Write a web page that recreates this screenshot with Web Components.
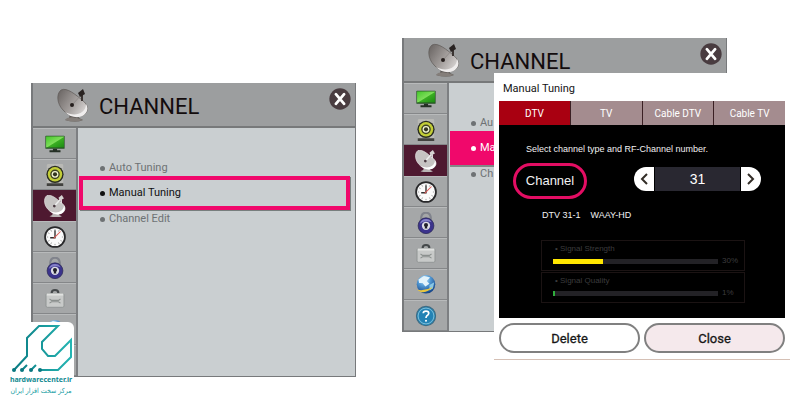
<!DOCTYPE html>
<html lang="en">
<head>
<meta charset="utf-8">
<title>Channel - Manual Tuning</title>
<style>
    body{
        margin: 0;
        background-color: #fff;
        font-family: Roboto, "Liberation Sans", sans-serif;
    }
</style>
</head>
<body>
<tuning-guide>
    <tv-screen>
        <tv-menu-item slot="items">Auto Tuning</tv-menu-item>
        <tv-menu-item slot="items" state="outlined">Manual Tuning</tv-menu-item>
        <tv-menu-item slot="items">Channel Edit</tv-menu-item>
    </tv-screen>
    <tv-screen>
        <tv-menu-item slot="items">Au</tv-menu-item>
        <tv-menu-item slot="items" state="filled">Ma</tv-menu-item>
        <tv-menu-item slot="items">Ch</tv-menu-item>
        <tuning-dialog slot="overlay">
            <signal-meter slot="meters" label="Signal Strength" value="30" color="#ffe600"></signal-meter>
            <signal-meter slot="meters" label="Signal Quality" value="1" color="#2fae3c"></signal-meter>
        </tuning-dialog>
    </tv-screen>
    <brand-logo slot="brand"></brand-logo>
</tuning-guide>

<script>
const icons = {
    dish: `
        <defs>
            <linearGradient id="bowl" x1="0" y1="0.2" x2="1" y2="0.8">
                <stop offset="0" stop-color="#6f6a68"/><stop offset="0.5" stop-color="#a19c9a"/><stop offset="1" stop-color="#dddad9"/>
            </linearGradient>
        </defs>
        <path d="M13 25 L21 24 L22 29 L26 31 Q19 34 8 31 L12 29Z" fill="#5d5855"/>
        <path d="M10 29 Q17 27 26 31 Q17 34 8 31Z" fill="#847e7a"/>
        <path d="M4 1 C-1 5 0 15 6 21 C12 28 22 30 28 25 C33 20 30 15 25 11 C19 6 10 -2 4 1Z" fill="url(#bowl)" stroke="#5f5a58" stroke-width="0.7"/>
        <path d="M8 23 C14 29 23 30 28 25 C31 22 31 18 29 15 C29 25 17 28 8 23Z" fill="#efeded"/>
        <path d="M15 16 L25 5" fill="none" stroke="#8a8583" stroke-width="0.8"/>
        <path d="M25 12 L25 6" fill="none" stroke="#3b3432" stroke-width="2"/>
        <path d="M21 4 L26 0 L28 5 L23 8Z" fill="#292322"/>
        <circle cx="15" cy="16" r="2" fill="#251e1d"/>`,
    dishLight: `
        <path d="M13 25 L21 24 L22 29 L26 31 Q19 34 8 31 L12 29Z" fill="#b9b4b4"/>
        <path d="M4 1 C-1 5 0 15 6 21 C12 28 22 30 28 25 C33 20 30 15 25 11 C19 6 10 -2 4 1Z" fill="#c6c3c2" stroke="#e6e3e3" stroke-width="1"/>
        <path d="M8 23 C14 29 23 30 28 25 C31 22 31 18 29 15 C29 25 17 28 8 23Z" fill="#fff"/>
        <path d="M15 16 L25 5 M25 12 V6" fill="none" stroke="#eee" stroke-width="2"/>
        <path d="M21 4 L26 0 L29 5 L23 8Z" fill="#d6d2d1"/>
        <circle cx="15" cy="16" r="2" fill="#4a3a40"/>`,
    monitor: `
        <defs>
            <linearGradient id="green" x1="0" y1="0" x2="1" y2="1">
                <stop offset="0" stop-color="#45c72b"/><stop offset="0.5" stop-color="#7ddd59"/><stop offset="0.55" stop-color="#3aae22"/><stop offset="1" stop-color="#1b8a12"/>
            </linearGradient>
        </defs>
        <rect x="2" y="4" width="28" height="19" rx="1" fill="#275424"/>
        <rect x="3" y="5" width="26" height="16" fill="url(#green)"/>
        <path d="M13 23 H19 V25 H24 V28 H8 V25 H13Z" fill="#253025"/>`,
    speaker: `
        <rect x="4" y="0" width="24" height="32" rx="2" fill="#b9b9b5"/>
        <path d="M4 28 H28 V32 H4Z" fill="#41413e"/>
        <circle cx="16" cy="15" r="12.500" fill="#2a2d20"/>
        <circle cx="16" cy="15" r="10.500" fill="#c3ce37"/>
        <circle cx="16" cy="15" r="6" fill="#f3f6d4" stroke="#3d4022" stroke-width="2"/>
        <circle cx="16" cy="15" r="3" fill="#31331e"/>`,
    clock: `
        <circle cx="16" cy="16" r="14.500" fill="#fafafa" stroke="#28282a" stroke-width="2.500"/>
        <path d="M16 4V6 M16 26V28 M4 16H6 M26 16H28 M10 6L11 8 M22 6L21 8 M10 26L11 24 M22 26L21 24 M6 10L8 11 M6 22L8 21 M26 22L24 21" stroke="#777" stroke-width="1"/>
        <path d="M16 6 V17 H9" fill="none" stroke="#303030" stroke-width="2"/>
        <path d="M14 18 L24 8" stroke="#dd5751" stroke-width="1.5"/>`,
    lock: `
        <path d="M9 12 V8 Q10 1 16 1 Q22 1 23 8 V12" fill="none" stroke="#80838c" stroke-width="3"/>
        <circle cx="16" cy="20" r="11.500" fill="#3b338c" stroke="#292650" stroke-width="1"/>
        <path d="M7 17 Q9 10 16 10 Q22 10 24 15 Q15 11 7 17Z" fill="#8580c8"/>
        <circle cx="16" cy="20" r="6" fill="#dcdce5"/>
        <circle cx="16" cy="19" r="3" fill="#22202b"/>
        <path d="M15 20 H17 L18 24 H14Z" fill="#22202b"/>`,
    toolbox: `
        <path d="M11 8 Q11 3 16 3 Q21 3 21 8" fill="none" stroke="#45494b" stroke-width="3"/>
        <rect x="3" y="8" width="26" height="20" rx="2" fill="#c8cac9" stroke="#858987"/>
        <rect x="4" y="8" width="24" height="3" fill="#e0e1e0"/>
        <path d="M8 16 L11 18 H21 L24 16 M8 22 L11 20 H21 L24 22" fill="none" stroke="#8b908e" stroke-width="1.5"/>`,
    globe: `
        <defs>
            <radialGradient id="sea" cx="0.4" cy="0.25" r="0.8">
                <stop offset="0" stop-color="#d1efff"/><stop offset="0.4" stop-color="#559dd7"/><stop offset="1" stop-color="#0b397f"/>
            </radialGradient>
        </defs>
        <circle cx="16" cy="15" r="13.500" fill="url(#sea)"/>
        <path d="M5 8 L13 3 L22 5 L17 10 L21 14 L15 18 L11 13 L6 13Z" fill="#e3f3fb"/>
        <path d="M21 16 L28 12 L26 21 L21 24Z" fill="#88c7e5"/>
        <path d="M3 23 Q15 25 26 19 Q18 28 8 26Z" fill="#e8c641"/>`,
    help: `
        <circle cx="16" cy="16" r="14" fill="#2787b5" stroke="#3e6b83" stroke-width="1.5"/>
        <circle cx="16" cy="16" r="11.500" fill="#2382b4" stroke="#a4d7ea" stroke-width="1"/>
        <path d="M12 12 Q12 9 16 9 Q20 9 20 12 Q20 14 17 16 Q16 17 16 19" fill="none" stroke="#fff" stroke-width="2.500"/>
        <circle cx="16" cy="23" r="1.500" fill="#fff"/>`,
    close: `
        <circle cx="16" cy="16" r="15.500" fill="#493c40"/>
        <path d="M10 9 L22 23 M22 9 L10 23" stroke="#fff" stroke-width="4" stroke-linecap="round"/>`
};

class TvIcon extends HTMLElement{
    constructor(){
        super();
        this.attachShadow({mode: 'open'});
    }
    connectedCallback(){
        this.shadowRoot.innerHTML = `
            <style>
                :host{
                    display: block;
                    width: 22px;
                    height: 22px;
                }
                svg{
                    display: block;
                    width: 100%;
                    height: 100%;
                }
            </style>
            <svg viewBox="0 0 32 32" aria-hidden="true">${icons[this.getAttribute('name')]}</svg>
        `;
    }
}
customElements.define('tv-icon', TvIcon);

class TvMenuItem extends HTMLElement{
    constructor(){
        super();
        this.attachShadow({mode: 'open'});
    }
    connectedCallback(){
        this.shadowRoot.innerHTML = `
            <style>
                :host{
                    display: block;
                    --item-color: #6e7274;
                }
                button{
                    display: flex;
                    align-items: center;
                    gap: 4px;
                    box-sizing: border-box;
                    width: 100%;
                    height: 16px;
                    padding: 0 21px;
                    border: 0;
                    background: none;
                    color: var(--item-color);
                    font-family: inherit;
                    font-size: 11px;
                    line-height: 16px;
                    text-align: left;
                }
                button:before{
                    content: '';
                    width: 5px;
                    height: 5px;
                    border-radius: 50%;
                    background-color: var(--item-color);
                }
                :host([state]){
                    margin-bottom: 1px;
                }
                :host([state]) button{
                    height: 34px;
                }
                :host([state="outlined"]){
                    --item-color: #111;
                }
                :host([state="outlined"]) button{
                    padding: 0 17px;
                    border: 4px solid #f0086b;
                    box-shadow: 1px 1px 0 #777e7d;
                }
                :host([state="filled"]){
                    --item-color: #fff;
                }
                :host([state="filled"]) button{
                    background-color: #f0086b;
                    box-shadow: 0 2px 0 #818886;
                }
            </style>
            <button type="button"><span><slot></slot></span></button>
        `;
    }
}
customElements.define('tv-menu-item', TvMenuItem);

class TvScreen extends HTMLElement{
    constructor(){
        super();
        this.attachShadow({mode: 'open'});
    }
    getSidebar(){
        const names = ['monitor', 'speaker', 'dishLight', 'clock', 'lock', 'toolbox', 'globe', 'help'];
        return names.map(name => `
            <button type="button" class="${name === 'dishLight' ? 'active' : ''}" aria-label="${name}">
                <tv-icon name="${name}"></tv-icon>
            </button>`).join('');
    }
    getStyles(){
        return `
            <style>
                :host{
                    display: block;
                    position: relative;
                    flex: 1;
                    box-sizing: border-box;
                    border: 2px solid #77797b;
                    border-width: 0 1px 1px 2px;
                    background-color: #cacfd1;
                }
                header{
                    display: flex;
                    align-items: center;
                    gap: 10px;
                    box-sizing: border-box;
                    height: 45px;
                    padding: 0 4px 0 24px;
                    border-bottom: 2px solid #77797a;
                    background-color: #9c9e9f;
                }
                header tv-icon{
                    width: 32px;
                    height: 34px;
                }
                h1{
                    flex: 1;
                    margin: 0;
                    padding-top: 5px;
                    color: #130c0d;
                    font-size: 22px;
                    font-weight: 400;
                    line-height: 30px;
                }
                button{
                    padding: 0;
                    border: 0;
                    background: none;
                }
                .close{
                    align-self: flex-start;
                    padding-top: 5px;
                }
                .close tv-icon{
                    width: 22px;
                    height: 22px;
                }
                .body{
                    display: flex;
                }
                nav{
                    width: 43px;
                    border-right: 2px solid #7d7f82;
                }
                nav button{
                    display: flex;
                    align-items: center;
                    justify-content: center;
                    box-sizing: border-box;
                    width: 100%;
                    height: 31px;
                    border-bottom: 1px solid #858789;
                    border-top: 1px solid #b8babb;
                    background-color: #a5a7a8;
                }
                nav .active{
                    border-color: #4e1930;
                    background-color: #4e1930;
                }
                .items{
                    flex: 1;
                    padding: 32px 5px 0 1px;
                }
            </style>
        `;
    }
    connectedCallback(){
        this.shadowRoot.innerHTML = `
            ${this.getStyles()}
            <header>
                <tv-icon name="dish"></tv-icon>
                <h1>CHANNEL</h1>
                <button type="button" class="close" aria-label="Close"><tv-icon name="close"></tv-icon></button>
            </header>
            <div class="body">
                <nav>${this.getSidebar()}</nav>
                <div class="items"><slot name="items"></slot></div>
            </div>
            <slot name="overlay"></slot>
        `;
    }
}
customElements.define('tv-screen', TvScreen);

class SignalMeter extends HTMLElement{
    constructor(){
        super();
        this.attachShadow({mode: 'open'});
    }
    connectedCallback(){
        const value = this.getAttribute('value');
        this.shadowRoot.innerHTML = `
            <style>
                :host{
                    display: block;
                    padding: 2px 4px 3px 11px;
                    border: 1px solid #1b1313;
                    color: #3c3c3e;
                    font-size: 8px;
                    line-height: 12px;
                }
                label{
                    display: block;
                    padding-left: 2px;
                }
                .row{
                    display: flex;
                    align-items: center;
                    gap: 4px;
                }
                progress{
                    appearance: none;
                    flex: 1;
                    min-width: 0;
                    height: 5px;
                    border: 0;
                }
                progress::-webkit-progress-bar{
                    background-color: #232226;
                }
                progress::-webkit-progress-value{
                    background-color: ${this.getAttribute('color')};
                }
                output{
                    width: 18px;
                }
            </style>
            <label for="level">• ${this.getAttribute('label')}</label>
            <div class="row">
                <progress id="level" max="100" value="${value}"></progress>
                <output>${value}%</output>
            </div>
        `;
    }
}
customElements.define('signal-meter', SignalMeter);

class TuningDialog extends HTMLElement{
    constructor(){
        super();
        this.attachShadow({mode: 'open'});
    }
    getStyles(){
        return `
            <style>
                /* floats over the right edge of the screen */
                :host{
                    display: block;
                    position: absolute;
                    top: 35px;
                    left: 90px;
                    right: -64px;
                    box-sizing: border-box;
                    padding: 6px 5px;
                    border-bottom: 1px solid #d5c0b5;
                    background-color: #fff;
                }
                h2{
                    margin: 0;
                    padding: 0 4px 2px;
                    color: #151515;
                    font-size: 11px;
                    font-weight: 400;
                    line-height: 20px;
                }
                button, input{
                    margin: 0;
                    padding: 0;
                    border: 0;
                    font-family: inherit;
                }
                .tabs{
                    display: grid;
                    grid-template-columns: repeat(4, 1fr);
                    gap: 1px;
                    background-color: #3b2024;
                }
                .tabs button{
                    height: 24px;
                    background-color: #a48c8f;
                    color: #fff;
                    font-size: 10px;
                }
                .tabs .selected{
                    background-color: #a90011;
                }
                .content{
                    padding: 16px 24px 15px 14px;
                    background-color: #000;
                    color: #f2f2f2;
                    font-family: "Liberation Sans", sans-serif;
                    font-size: 9px;
                    line-height: 16px;
                }
                p{
                    margin: 0;
                    padding-left: 13px;
                }
                .channel{
                    display: flex;
                    align-items: center;
                    justify-content: space-between;
                    padding: 6px 0 8px;
                }
                .channel label{
                    box-sizing: border-box;
                    width: 74px;
                    border: 3px solid #e30d63;
                    border-radius: 18px;
                    font-size: 13px;
                    line-height: 30px;
                    text-align: center;
                }
                .stepper{
                    display: flex;
                    gap: 1px;
                    height: 24px;
                    padding-bottom: 4px;
                }
                .stepper button{
                    display: flex;
                    align-items: center;
                    justify-content: center;
                    width: 20px;
                    border-radius: 12px 0 0 12px;
                    background-color: #fff;
                }
                .stepper button:last-child{
                    border-radius: 0 12px 12px 0;
                }
                .stepper svg{
                    width: 8px;
                    height: 12px;
                    fill: none;
                    stroke: #332d27;
                    stroke-width: 2;
                }
                input{
                    width: 85px;
                    background-color: #292831;
                    color: #fff;
                    font-size: 14px;
                    text-align: center;
                }
                .station{
                    display: flex;
                    gap: 10px;
                    padding-left: 29px;
                }
                .meters{
                    display: grid;
                    gap: 1px;
                    padding: 17px 16px 0 28px;
                }
                footer{
                    display: grid;
                    grid-template-columns: 1fr 1fr;
                    gap: 4px;
                    padding-top: 5px;
                }
                footer button{
                    height: 30px;
                    border: 2px solid #808080;
                    border-radius: 15px;
                    background-color: #fff;
                    color: #161616;
                    font-size: 13px;
                    -webkit-text-stroke: 0.3px #161616;
                }
                footer button:last-child{
                    background-color: #f5e9ec;
                }
            </style>
        `;
    }
    connectedCallback(){
        this.shadowRoot.innerHTML = `
            ${this.getStyles()}
            <h2>Manual Tuning</h2>
            <div class="tabs">
                <button type="button" class="selected">DTV</button>
                <button type="button">TV</button>
                <button type="button">Cable DTV</button>
                <button type="button">Cable TV</button>
            </div>
            <div class="content">
                <p>Select channel type and RF-Channel number.</p>
                <div class="channel">
                    <label for="number">Channel</label>
                    <div class="stepper">
                        <button type="button" aria-label="Previous"><svg viewBox="0 0 8 12"><path d="M7 1 L2 6 L7 11"/></svg></button>
                        <input id="number" type="text" value="31">
                        <button type="button" aria-label="Next"><svg viewBox="0 0 8 12"><path d="M1 1 L6 6 L1 11"/></svg></button>
                    </div>
                </div>
                <div class="station"><span>DTV 31-1</span><span>WAAY-HD</span></div>
                <div class="meters"><slot name="meters"></slot></div>
            </div>
            <footer>
                <button type="button">Delete</button>
                <button type="button">Close</button>
            </footer>
        `;
    }
}
customElements.define('tuning-dialog', TuningDialog);

class BrandLogo extends HTMLElement{
    constructor(){
        super();
        this.attachShadow({mode: 'open'});
    }
    connectedCallback(){
        this.shadowRoot.innerHTML = `
            <style>
                :host{
                    display: block;
                    box-sizing: border-box;
                    width: 66px;
                    padding: 2px 2px 4px;
                    border-radius: 6px;
                    background-color: #fff;
                    color: #129b9f;
                    white-space: nowrap;
                }
                svg{
                    display: block;
                    width: 62px;
                    height: 50px;
                }
                a{
                    display: flex;
                    justify-content: center;
                    color: #128a91;
                    font: 700 7px/12px "Noto Sans", sans-serif;
                    text-decoration: none;
                }
                div{
                    display: flex;
                    justify-content: center;
                    font: 7px/10px "DejaVu Sans Condensed", "DejaVu Sans", sans-serif;
                }
            </style>
            <svg viewBox="0 0 62 50" aria-hidden="true">
                <defs>
                    <linearGradient id="teal" gradientUnits="userSpaceOnUse" x1="0" y1="0" x2="62" y2="0">
                        <stop offset="0" stop-color="#08777f"/><stop offset="1" stop-color="#25b6b4"/>
                    </linearGradient>
                </defs>
                <g fill="none" stroke="url(#teal)" stroke-width="2">
                    <path d="M4 46 L17 32 V14 L29 2 H48 L32 18 V25 L38 32 H45 L61 16 V33 L48 46 H30"/>
                    <path d="M12 46 L17 41 M21 46 L26 41"/>
                </g>
                <g fill="#08777f"><circle cx="4" cy="46" r="2"/><circle cx="12" cy="46" r="2"/><circle cx="21" cy="46" r="2"/><circle cx="30" cy="46" r="2"/></g>
            </svg>
            <a href="#">hardwarecenter.ir</a>
            <div lang="fa" dir="rtl">مرکز سخت افزار ایران</div>
        `;
    }
}
customElements.define('brand-logo', BrandLogo);

class TuningGuide extends HTMLElement{
    constructor(){
        super();
        this.attachShadow({mode: 'open'});
    }
    connectedCallback(){
        this.shadowRoot.innerHTML = `
            <style>
                :host{
                    display: block;
                    position: relative;
                }
                main{
                    display: flex;
                    align-items: flex-start;
                    gap: 46px;
                    padding: 38px 73px 23px 31px;
                }
                ::slotted(tv-screen:first-child){
                    margin-top: 45px;
                }
                /* watermark over the corner of the first screen */
                ::slotted(brand-logo){
                    position: absolute;
                    left: 8px;
                    bottom: 0;
                }
            </style>
            <main><slot></slot></main>
            <slot name="brand"></slot>
        `;
    }
}
customElements.define('tuning-guide', TuningGuide);
</script>
</body>
</html>
